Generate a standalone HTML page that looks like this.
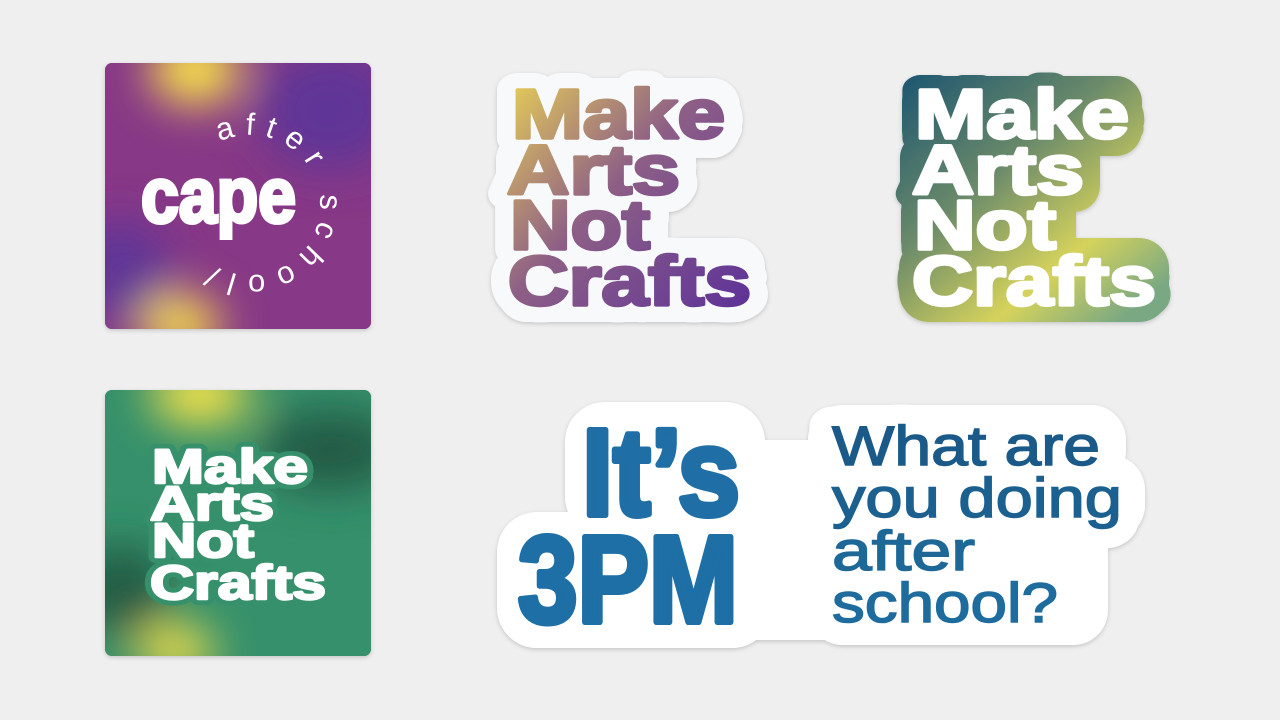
<!DOCTYPE html>
<html><head><meta charset="utf-8"><style>
html,body{margin:0;padding:0;background:#efefef;}
svg{display:block}
text{font-family:"Liberation Sans",sans-serif;font-weight:bold}
</style></head><body>
<svg width="1280" height="720" viewBox="0 0 1280 720" xmlns="http://www.w3.org/2000/svg">
<defs>
<filter id="blur" x="-50%" y="-50%" width="200%" height="200%"><feGaussianBlur stdDeviation="22"/></filter>
<filter id="sh" x="-10%" y="-10%" width="120%" height="120%"><feDropShadow dx="0" dy="1.5" stdDeviation="2" flood-color="#000" flood-opacity="0.18"/></filter>
<clipPath id="c1"><rect x="105" y="63" width="266" height="266" rx="7"/></clipPath>
<clipPath id="c2"><rect x="105" y="390" width="266" height="266" rx="7"/></clipPath>
<linearGradient id="g1" x1="505" y1="85" x2="750" y2="305" gradientUnits="userSpaceOnUse">
<stop offset="0" stop-color="#e6cd58"/><stop offset="0.45" stop-color="#8d5f86"/><stop offset="1" stop-color="#5e3298"/></linearGradient>
<linearGradient id="g2" x1="900" y1="80" x2="1110" y2="330" gradientUnits="userSpaceOnUse">
<stop offset="0" stop-color="#1d5670"/><stop offset="0.4" stop-color="#6a8a6a"/><stop offset="0.75" stop-color="#d6d35c"/><stop offset="1" stop-color="#7aa882"/></linearGradient>
<path id="arc" d="M180,205 A70,70 0 1 1 320,205 A70,70 0 1 1 180,205"/>
</defs>

<!-- Square 1 -->
<g filter="url(#sh)"><rect x="105" y="63" width="266" height="266" rx="7" fill="#883a86"/></g>
<g clip-path="url(#c1)">
<rect x="105" y="63" width="266" height="266" fill="#873886"/>
<g filter="url(#blur)">
<ellipse cx="330" cy="110" rx="70" ry="60" fill="#5f3597"/>
<ellipse cx="120" cy="270" rx="50" ry="50" fill="#5f3597"/>
<ellipse cx="195" cy="70" rx="45" ry="35" fill="#fbe54a"/>
<ellipse cx="180" cy="325" rx="40" ry="30" fill="#f7de48"/>
</g>
<text x="141" y="222" font-size="78" fill="#fff" stroke="#fff" stroke-width="4" textLength="155" lengthAdjust="spacingAndGlyphs">cape</text>
<text font-size="31" fill="#fff" style="font-weight:normal" letter-spacing="10"><textPath href="#arc" startOffset="78">after school/</textPath></text>
</g>

<!-- Square 2 -->
<g filter="url(#sh)"><rect x="105" y="390" width="266" height="266" rx="7" fill="#35906b"/></g>
<g clip-path="url(#c2)">
<rect x="105" y="390" width="266" height="266" fill="#35906b"/>
<g filter="url(#blur)">
<ellipse cx="330" cy="450" rx="70" ry="40" fill="#215a45"/>
<ellipse cx="120" cy="590" rx="50" ry="45" fill="#225b45"/>
<ellipse cx="200" cy="395" rx="50" ry="30" fill="#fbe54a"/>
<ellipse cx="175" cy="650" rx="40" ry="25" fill="#f5e04a"/>
</g>
<g font-size="48" fill="#35906b" stroke="#35906b" stroke-width="12" stroke-linejoin="round">
<text x="152" y="483" textLength="156" lengthAdjust="spacingAndGlyphs">Make</text>
<text x="150" y="520" textLength="124" lengthAdjust="spacingAndGlyphs">Arts</text>
<text x="152" y="557" textLength="102" lengthAdjust="spacingAndGlyphs">Not</text>
<text x="150" y="599" textLength="176" lengthAdjust="spacingAndGlyphs">Crafts</text>
</g>
<g font-size="48" fill="#fff" stroke="#fff" stroke-width="2.5" stroke-linejoin="round">
<text x="152" y="483" textLength="156" lengthAdjust="spacingAndGlyphs">Make</text>
<text x="150" y="520" textLength="124" lengthAdjust="spacingAndGlyphs">Arts</text>
<text x="152" y="557" textLength="102" lengthAdjust="spacingAndGlyphs">Not</text>
<text x="150" y="599" textLength="176" lengthAdjust="spacingAndGlyphs">Crafts</text>
</g>
</g>

<!-- Sticker 1 -->
<g font-size="70">
<g filter="url(#sh)" fill="#f8f9fb" stroke="#f8f9fb" stroke-width="34" stroke-linejoin="round">
<rect x="500" y="78" width="240" height="80" rx="28" stroke="none"/>
<rect x="496" y="132" width="200" height="80" rx="28" stroke="none"/>
<rect x="498" y="186" width="170" height="80" rx="28" stroke="none"/>
<rect x="497" y="238" width="268" height="84" rx="30" stroke="none"/>
<text x="512" y="138" textLength="213" lengthAdjust="spacingAndGlyphs">Make</text>
<text x="507" y="194" textLength="173" lengthAdjust="spacingAndGlyphs">Arts</text>
<text x="510" y="249" textLength="140" lengthAdjust="spacingAndGlyphs">Not</text>
<text x="508" y="305" textLength="243" lengthAdjust="spacingAndGlyphs">Crafts</text>
</g>
<g fill="url(#g1)" stroke="url(#g1)" stroke-width="3.5" stroke-linejoin="round">
<text x="512" y="138" textLength="213" lengthAdjust="spacingAndGlyphs">Make</text>
<text x="507" y="194" textLength="173" lengthAdjust="spacingAndGlyphs">Arts</text>
<text x="510" y="249" textLength="140" lengthAdjust="spacingAndGlyphs">Not</text>
<text x="508" y="305" textLength="243" lengthAdjust="spacingAndGlyphs">Crafts</text>
</g>
</g>

<!-- Sticker 2 -->
<g font-size="70">
<g filter="url(#sh)" fill="url(#g2)" stroke="url(#g2)" stroke-width="30" stroke-linejoin="round">
<rect x="902" y="76" width="240" height="80" rx="26" stroke="none"/>
<rect x="900" y="132" width="200" height="80" rx="26" stroke="none"/>
<rect x="901" y="186" width="175" height="80" rx="26" stroke="none"/>
<rect x="899" y="238" width="270" height="84" rx="30" stroke="none"/>
<text x="915" y="138" textLength="214" lengthAdjust="spacingAndGlyphs">Make</text>
<text x="912" y="194" textLength="172" lengthAdjust="spacingAndGlyphs">Arts</text>
<text x="914" y="249" textLength="142" lengthAdjust="spacingAndGlyphs">Not</text>
<text x="912" y="305" textLength="244" lengthAdjust="spacingAndGlyphs">Crafts</text>
</g>
<g fill="#fff" stroke="#fff" stroke-width="3.5" stroke-linejoin="round">
<text x="915" y="138" textLength="214" lengthAdjust="spacingAndGlyphs">Make</text>
<text x="912" y="194" textLength="172" lengthAdjust="spacingAndGlyphs">Arts</text>
<text x="914" y="249" textLength="142" lengthAdjust="spacingAndGlyphs">Not</text>
<text x="912" y="305" textLength="244" lengthAdjust="spacingAndGlyphs">Crafts</text>
</g>
</g>

<!-- Sticker 3 -->
<g filter="url(#sh)" fill="#fff" stroke="#fff" stroke-width="40" stroke-linejoin="round">
<rect x="565" y="402" width="200" height="135" rx="40" stroke="none"/>
<rect x="497" y="512" width="275" height="136" rx="40" stroke="none"/>
<rect x="740" y="440" width="100" height="200" stroke="none"/>
<rect x="808" y="405" width="318" height="80" rx="35" stroke="none"/>
<rect x="808" y="455" width="337" height="85" rx="35" stroke="none"/>
<rect x="808" y="510" width="300" height="135" rx="35" stroke="none"/>
<text x="582" y="515" font-size="123" textLength="158" lengthAdjust="spacingAndGlyphs">It’s</text>
<text x="518" y="622" font-size="123" textLength="220" lengthAdjust="spacingAndGlyphs">3PM</text>
<g font-size="56" style="font-weight:normal">
<text x="832" y="465" textLength="268" lengthAdjust="spacingAndGlyphs">What are</text>
<text x="832" y="517" textLength="290" lengthAdjust="spacingAndGlyphs">you doing</text>
<text x="832" y="570" textLength="143" lengthAdjust="spacingAndGlyphs">after</text>
<text x="832" y="622" textLength="226" lengthAdjust="spacingAndGlyphs">school?</text>
</g>
</g>
<text x="582" y="515" font-size="123" fill="#1f6fa6" stroke="#1f6fa6" stroke-width="6" stroke-linejoin="round" textLength="158" lengthAdjust="spacingAndGlyphs">It’s</text>
<text x="518" y="622" font-size="123" fill="#1d6fa6" stroke="#1d6fa6" stroke-width="6" stroke-linejoin="round" textLength="220" lengthAdjust="spacingAndGlyphs">3PM</text>
<g font-size="56" style="font-weight:normal" stroke-width="1.5">
<text x="832" y="465" fill="#1b5a88" stroke="#1b5a88" textLength="268" lengthAdjust="spacingAndGlyphs" style="font-weight:normal">What are</text>
<text x="832" y="517" fill="#1c6090" stroke="#1c6090" textLength="290" lengthAdjust="spacingAndGlyphs" style="font-weight:normal">you doing</text>
<text x="832" y="570" fill="#1e6898" stroke="#1e6898" textLength="143" lengthAdjust="spacingAndGlyphs" style="font-weight:normal">after</text>
<text x="832" y="622" fill="#1e6c9e" stroke="#1e6c9e" textLength="226" lengthAdjust="spacingAndGlyphs" style="font-weight:normal">school?</text>
</g>
</svg>
</body></html>
